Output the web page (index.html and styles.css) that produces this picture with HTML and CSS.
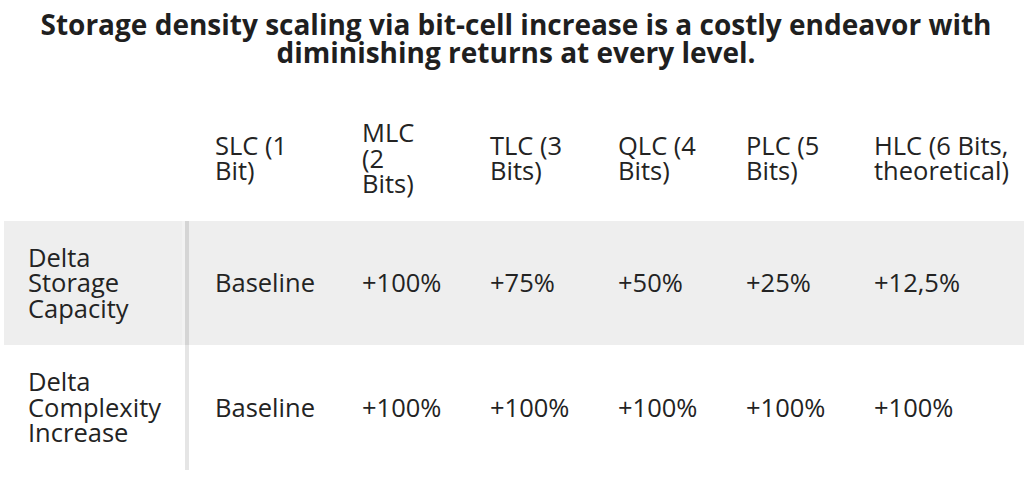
FILE: index.html
```html
<!DOCTYPE html>
<html lang="en">
<head>
<meta charset="utf-8">
<title>Storage density scaling</title>
<link rel="stylesheet" href="styles.css">
</head>
<body>
<h1 class="title">Storage density scaling via bit-cell increase is a costly endeavor with<br>diminishing returns at every level.</h1>
<div class="table">
  <div class="row head">
    <div class="cell label"></div>
    <div class="cell">SLC (1<br>Bit)</div>
    <div class="cell">MLC<br>(2<br>Bits)</div>
    <div class="cell">TLC (3<br>Bits)</div>
    <div class="cell">QLC (4<br>Bits)</div>
    <div class="cell">PLC (5<br>Bits)</div>
    <div class="cell">HLC (6 Bits,<br>theoretical)</div>
  </div>
  <div class="row shaded">
    <div class="cell label divided">Delta<br>Storage<br>Capacity</div>
    <div class="cell">Baseline</div>
    <div class="cell">+100%</div>
    <div class="cell">+75%</div>
    <div class="cell">+50%</div>
    <div class="cell">+25%</div>
    <div class="cell">+12,5%</div>
  </div>
  <div class="row">
    <div class="cell label divided">Delta<br>Complexity<br>Increase</div>
    <div class="cell">Baseline</div>
    <div class="cell">+100%</div>
    <div class="cell">+100%</div>
    <div class="cell">+100%</div>
    <div class="cell">+100%</div>
    <div class="cell">+100%</div>
  </div>
</div>
</body>
</html>
```
FILE: styles.css
```css
html, body {
  margin: 0;
  padding: 0;
  background: #ffffff;
}
body {
  font-family: "Open Sans", "Liberation Sans", sans-serif;
  color: #222222;
}
.title {
  margin: 10px 0 0 8px;
  font-size: 28px;
  line-height: 28px;
  font-weight: 700;
  text-align: center;
  color: #1f1f1f;
}
.table {
  margin: 30px 0 0 4px;
  width: 1020px;
}
.row {
  display: grid;
  grid-template-columns: 185px 147px 128px 128px 128px 128px 176px;
  align-items: stretch;
}
.row.shaded {
  background: #eeeeee;
}
.cell {
  display: flex;
  align-items: center;
  padding: 24px 0 24px 26px;
  font-size: 25.5px;
  line-height: 25.5px;
  white-space: nowrap;
  color: #232323;
}
.cell.label {
  padding-left: 24px;
}
.cell.divided {
  border-right: 4px solid rgba(0, 0, 0, 0.1);
  box-shadow: inset -3px 0 0 rgba(255, 255, 255, 0.25);
}
```
